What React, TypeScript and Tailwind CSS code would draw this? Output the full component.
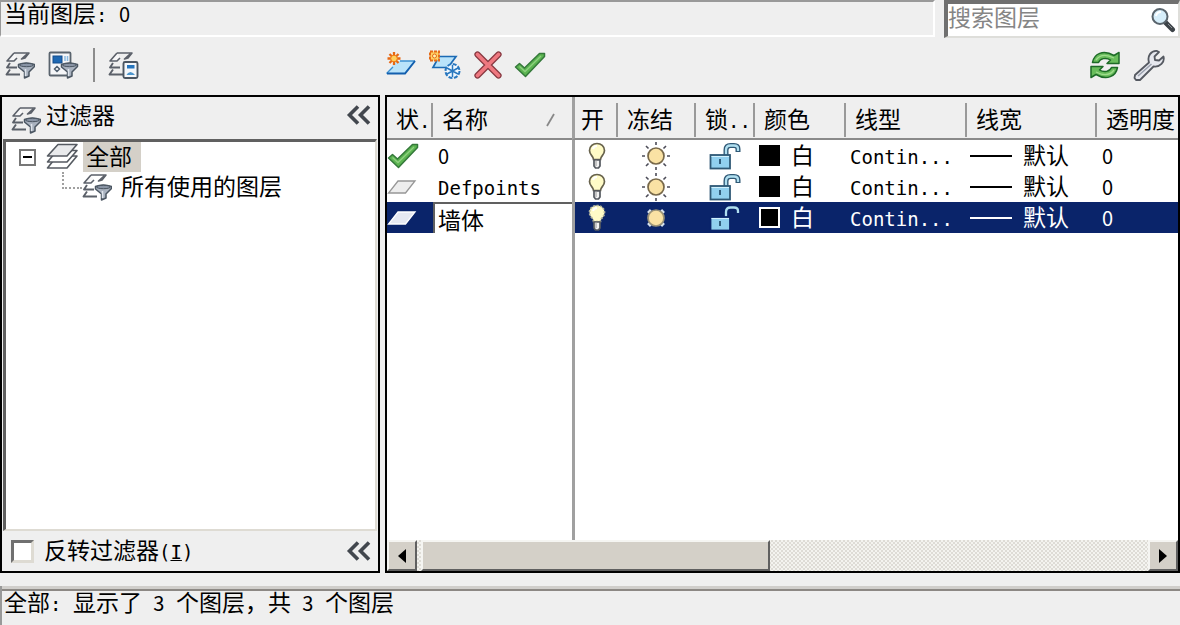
import React from "react";

const CJK = "font-['Liberation_Sans','Noto_Sans_CJK_SC',sans-serif] text-[23px] leading-[28px]";
const MONO = "font-['DejaVu_Sans_Mono',monospace] text-[19px] leading-none";
const NUM = "font-['Noto_Sans_CJK_SC',sans-serif] text-[20px] leading-none";

function Mono({ children }: { children: React.ReactNode }) {
  return <span className={`${MONO} whitespace-pre`}>{children}</span>;
}

function Num({ children }: { children: React.ReactNode }) {
  return <span className={NUM}>{children}</span>;
}

function Svg({ w = 30, h = 30, children }: { w?: number; h?: number; children: React.ReactNode }) {
  return (
    <svg width={w} height={h} viewBox={`0 0 ${w} ${h}`} fill="none" aria-hidden="true" className="block shrink-0">
      {children}
    </svg>
  );
}

function Stack() {
  return (
    <g stroke="#5b6069" strokeWidth="1.6" strokeLinejoin="round">
      <path d="M9 3H24L20 8L16.500 9L22 4M9 3L2 11H9L12 8" fill="#f7f7f8" />
      <path d="M5 13L2 17.500H12M5 19.500L1.500 24.500H15" strokeWidth="1.9" />
    </g>
  );
}

function Funnel() {
  return (
    <g stroke="#4a5561" strokeWidth="1.500" strokeLinejoin="round">
      <path d="M13.500 14.500Q21 11.500 29.500 14.500V16.500L24 22V26L19.500 28V22L13.500 17Z" fill="#a9b2bf" />
      <ellipse cx="21.500" cy="15" rx="7" ry="1.700" fill="#8994a5" strokeWidth="1" />
      <path d="M20.500 19V26" stroke="#dfe4ec" strokeWidth="1.500" />
    </g>
  );
}

function FilterIcon() {
  return (
    <Svg>
      <Stack />
      <Funnel />
    </Svg>
  );
}

function StateFilterIcon() {
  return (
    <Svg w={32}>
      <rect x="1.500" y="2.500" width="21" height="23" rx="1" fill="#f5f6f8" stroke="#59636d" strokeWidth="1.800" />
      <rect x="5" y="6" width="9" height="7" fill="#1e68b3" stroke="#144d8c" />
      <path d="M17 6V11M19.500 6V11" stroke="#8bbbe2" strokeWidth="1.500" />
      <path d="M9 16.500L11.500 19L9 21.500L6.500 19Z" stroke="#51606f" strokeWidth="1.500" />
      <Funnel />
    </Svg>
  );
}

function StatesManagerIcon() {
  return (
    <Svg w={32}>
      <Stack />
      <rect x="15.500" y="12" width="14" height="16" rx="1.500" fill="#f4f7fa" stroke="#4b5662" strokeWidth="1.900" />
      <rect x="19" y="15" width="7.500" height="3.500" fill="#2675bd" />
      <path d="M18.500 25L20 23L22.500 22L25 23L27 25Z" fill="#4d96cd" />
    </Svg>
  );
}

function NewLayerIcon() {
  return (
    <Svg w={32}>
      <path d="M11 11H30L20 23.500H1.500Z" fill="#b9e3fa" />
      <path d="M15 11H30M8 17L1.500 23.500" stroke="#3c91d2" strokeWidth="1.300" />
      <path d="M30 11L20 23.500H2" stroke="#125fae" strokeWidth="2" />
      <path d="M9 2V15M2.500 8.500H15.500M4.500 4L13.500 13M13.500 4L4.500 13" stroke="#e76813" strokeWidth="2.300" />
      <circle cx="9" cy="8.500" r="3.300" fill="#ffd05d" stroke="#ed7b17" />
    </Svg>
  );
}

function NewFrozenIcon() {
  return (
    <Svg w={34}>
      <path d="M11 6.500H28L20 17.500H5Z" fill="#b9e3fa" stroke="#1b6ab4" strokeWidth="1.700" />
      <rect x="2" y="1.500" width="9" height="9" fill="#ffd365" stroke="#e56b17" strokeWidth="2" strokeDasharray="3 1" />
      <circle cx="6.500" cy="6" r="2" fill="#fff0b0" stroke="#e56b17" />
      <circle cx="24.500" cy="21" r="7" fill="#eff8ff" stroke="#2877bf" strokeWidth="2" strokeDasharray="4 1.500" />
      <path d="M24.500 15V27M19 18L30 24M30 18L19 24" stroke="#2877bf" strokeWidth="1.500" />
    </Svg>
  );
}

function DeleteIcon() {
  return (
    <Svg>
      <path d="M4.500 4.500L25.500 25.500M25.500 4.500L4.500 25.500" stroke="#873840" strokeWidth="6.200" strokeLinecap="round" />
      <path d="M4.500 4.500L25.500 25.500M25.500 4.500L4.500 25.500" stroke="#ef7880" strokeWidth="3.800" strokeLinecap="round" />
    </Svg>
  );
}

function CheckIcon() {
  return (
    <Svg w={32} h={28}>
      <path d="M1.500 16L5.500 12.500L10.500 17L25.500 2.500H30.500V5.500L11.500 25.500Z" fill="#5bb450" stroke="#34783a" strokeWidth="1.500" strokeLinejoin="round" />
      <path d="M5.500 15.500L11 20.500L27 5" stroke="#8fd080" strokeWidth="1.300" />
    </Svg>
  );
}

function RefreshIcon() {
  return (
    <Svg w={32}>
      <g fill="#68bd5b" stroke="#1d6b27" strokeWidth="1.500" strokeLinejoin="round">
        <path d="M3.500 12.500C5 4 14 -1 25 5.500L30 2.500V13.500H18L21.500 10C17 7 11 8.500 9.500 12.500Z" />
        <path d="M28.500 17.500C27 26 18 31 7 24.500L2 27.500V16.500H14L10.500 20C15 23 21 21.500 22.500 17.500Z" />
      </g>
      <path d="M7 10C11 4.500 18 4.500 25 8M25 20C21 25.500 14 25.500 7 22" stroke="#a0dc8e" strokeWidth="1.300" />
    </Svg>
  );
}

function WrenchIcon() {
  return (
    <Svg w={32} h={32}>
      <path d="M2 26L16 13.500C14 7 18 1.500 24 2L26 3L21.500 7.500L22 11L26 11.500L30.500 7.500C32 13 27 18.500 20.500 17.500L7 31H3L1.500 29Z" fill="#e6e8ee" stroke="#555961" strokeWidth="1.800" strokeLinejoin="round" />
      <path d="M5 27L18.500 15" stroke="#9aa0ad" strokeWidth="1.500" />
    </Svg>
  );
}

function SearchIcon() {
  return (
    <Svg w={26} h={26}>
      <path d="M15 15L22.500 22.500" stroke="#3d4348" strokeWidth="5" strokeLinecap="round" />
      <path d="M18 17L22 21" stroke="#8d9297" strokeWidth="1" />
      <circle cx="10" cy="9.500" r="7.500" fill="#d6eefa" stroke="#59646c" strokeWidth="2" />
      <path d="M6 9A5 5 0 0 1 11 5" stroke="#fff" strokeWidth="2" />
    </Svg>
  );
}

function LayersIcon() {
  return (
    <Svg w={32}>
      <g stroke="#555a61" strokeWidth="1.600" strokeLinejoin="round">
        <path d="M11 14H31L21 26H1.500Z" fill="#fff" />
        <path d="M11 8.500H31L21 20H1.500Z" fill="#fff" />
        <path d="M12 2.500H31L21 14H1.500Z" fill="#e9eaec" />
      </g>
    </Svg>
  );
}

function SheetIcon({ selected }: { selected?: boolean }) {
  return (
    <Svg w={30} h={16}>
      <path d="M11 2H28L18.500 14H1.500Z" fill={selected ? "#e6e9f2" : "#ededed"} stroke={selected ? "#fff" : "#969696"} strokeWidth="1.300" />
    </Svg>
  );
}

function BulbIcon({ selected }: { selected?: boolean }) {
  const line = selected ? "#b2b39b" : "#67624c";
  return (
    <Svg w={20} h={28}>
      <path d="M6.500 17.500C6.500 14 2.500 13 2.500 8.500C2.500 4 6 1.500 10 1.500S17.500 4 17.500 8.500C17.500 13 13.500 14 13.500 17.500Z" fill="#fffbc7" stroke={line} strokeWidth="1.700" strokeDasharray={selected ? "2 1.500" : undefined} />
      <path d="M7 18H13V24L11.500 26H8.500L7 24Z" fill="#f3f3f3" stroke="#555a60" strokeWidth="1.700" />
      <path d="M9 18V24" stroke="#999" />
      <path d="M6 7C6.500 5 8 4 10 4" stroke="#fff" strokeWidth="2" />
    </Svg>
  );
}

function SunIcon({ selected }: { selected?: boolean }) {
  return (
    <Svg>
      {!selected && (
        <path d="M15 1V4M15 26V29M1 15H4M26 15H29M5 5L7.500 7.500M22.500 22.500L25 25M5 25L7.500 22.500M22.500 7.500L25 5" stroke="#4c4c58" strokeWidth="1.600" />
      )}
      {selected && <path d="M7.500 7.500L10 10M20 20L22.500 22.500M7.500 22.500L10 20M20 10L22.500 7.500" stroke="#d7e3ef" strokeWidth="4" />}
      <circle cx="15" cy="15" r="8" fill="#fae2a4" stroke={selected ? "#9b9378" : "#77684a"} strokeWidth="1.700" />
    </Svg>
  );
}

function LockIcon({ selected }: { selected?: boolean }) {
  const line = selected ? "#0a246a" : "#2f5875";
  return (
    <Svg w={32} h={28}>
      <path d="M17 13V8Q17 3.500 21.500 3.500H25Q29 3.500 29 7V10" stroke={line} strokeWidth="5" />
      <path d="M17 13V8Q17 3.500 21.500 3.500H25Q29 3.500 29 7V9" stroke="#b0dff0" strokeWidth="2.300" />
      <rect x="1.500" y="13" width="19.500" height="13.500" fill="#91d0ef" stroke={line} strokeWidth="1.800" />
      <path d="M2.500 14.500H20" stroke="#d0f0fd" />
      <path d="M11 17V22" stroke="#315d7c" strokeWidth="2" />
    </Svg>
  );
}

function CollapseIcon() {
  return (
    <Svg w={26} h={20}>
      <path d="M12 1.500L3.500 10L12 18.500M23 1.500L14.500 10L23 18.500" stroke="#42474e" strokeWidth="3.600" />
    </Svg>
  );
}

type HeadProps = { label: React.ReactNode; pad: string; last?: boolean; sort?: boolean; split?: boolean };

function Head({ label, pad, last, sort, split }: HeadProps) {
  return (
    <th scope="col" className={`h-[43px] border-b-2 border-b-[#8a8a8a] bg-[#efefef] p-0 pt-1 text-left font-normal ${split ? "border-l-[3px] border-l-[#a0a0a0]" : ""}`}>
      <div className={`flex h-[34px] items-center whitespace-nowrap ${pad} ${last ? "" : "border-r-2 border-[#999]"}`}>
        <span className={CJK}>{label}</span>
        {sort && (
          <svg width="10" height="14" viewBox="0 0 10 14" className="mr-4 ml-auto" aria-hidden="true">
            <path d="M1 13L8 1" stroke="#888" strokeWidth="1.800" />
          </svg>
        )}
      </div>
    </th>
  );
}

const layers = [
  { name: "0", current: true },
  { name: "Defpoints" },
  { name: "墙体", selected: true },
];

const CELL = "flex h-[31px] items-center";

function LayerRow({ name, current, selected }: { name: string; current?: boolean; selected?: boolean }) {
  const [value, setValue] = React.useState(name);
  return (
    <tr className={`h-[31px] ${selected ? "bg-[#0a246a] text-white" : ""}`}>
      <td className="p-0">
        <div className={CELL}>{current ? <CheckIcon /> : <SheetIcon selected={selected} />}</div>
      </td>
      <td className="p-0">
        {selected ? (
          <input
            aria-label="名称"
            value={value}
            onChange={(e) => setValue(e.target.value)}
            className={`${CJK} block h-[31px] w-full border-t-2 border-l-2 border-[#606060] bg-white pl-[3px] text-black outline-none`}
          />
        ) : (
          <div className={`${CELL} pl-[5px]`}>
            <span>{current ? <Num>{name}</Num> : <Mono>{name}</Mono>}</span>
          </div>
        )}
      </td>
      <td className="border-l-[3px] border-[#a0a0a0] p-0">
        <div className={`${CELL} pl-3`}><BulbIcon selected={selected} /></div>
      </td>
      <td className="p-0">
        <div className={`${CELL} pl-[23px]`}><SunIcon selected={selected} /></div>
      </td>
      <td className="p-0">
        <div className={`${CELL} pl-[13px]`}><LockIcon selected={selected} /></div>
      </td>
      <td className="p-0">
        <div className={`${CELL} gap-[11px] pl-1`}>
          <span className={`size-[21px] border-2 bg-black ${selected ? "border-white" : "border-black"}`} />
          <span>白</span>
        </div>
      </td>
      <td className="p-0">
        <div className={`${CELL} pl-1`}><span><Mono>Contin...</Mono></span></div>
      </td>
      <td className="p-0">
        <div className={`${CELL} gap-[11px] pl-[3px]`}>
          <span className="w-[42px] border-t-2 border-current" />
          <span>默认</span>
        </div>
      </td>
      <td className="p-0">
        <div className={`${CELL} pl-[5px]`}><span><Num>0</Num></span></div>
      </td>
    </tr>
  );
}

function ScrollButton({ right }: { right?: boolean }) {
  return (
    <button aria-label={right ? "向右滚动" : "向左滚动"} className="flex w-[30px] items-center justify-center border-2 border-t-[#f5f5f2] border-r-[#606060] border-b-[#606060] border-l-[#f5f5f2] bg-[#d4d0c8]">
      <svg width="10" height="14" viewBox="0 0 10 14" aria-hidden="true">
        <path d={right ? "M1 0L9 7L1 14Z" : "M9 0L1 7L9 14Z"} fill="#000" />
      </svg>
    </button>
  );
}

export default function App() {
  return (
    <div className={`flex min-h-screen flex-col bg-[#efefef] text-black ${CJK}`}>
      <header className="flex h-[38px] gap-[9px]">
        <div className="mb-px flex-1 border-t-2 border-r-2 border-b-2 border-l border-t-[#999] border-r-white border-b-white border-l-[#999] pl-[3px]">
          <div className="leading-[24px] whitespace-nowrap">当前图层<Mono>: </Mono><Num>0</Num></div>
        </div>
        <label className="flex w-[236px] items-start justify-between border-t-4 border-r-2 border-b-2 border-l-4 border-t-[#707070] border-r-[#dededa] border-b-[#dededa] border-l-[#707070] bg-white pr-[2px]">
          <input aria-label="搜索图层" placeholder="搜索图层" className={`${CJK} h-[28px] w-[180px] bg-transparent outline-none placeholder:text-[#858585]`} />
          <span className="pt-[3px]"><SearchIcon /></span>
        </label>
      </header>

      <div className="flex h-[57px] items-center justify-between pr-[15px] pb-1 pl-[5px]">
        <div className="flex items-center">
          <div className="flex w-[380px] items-center">
            <button aria-label="新建特性过滤器"><FilterIcon /></button>
            <button aria-label="新建组过滤器" className="ml-[13px]"><StateFilterIcon /></button>
            <span className="ml-[13px] h-[34px] border-l-2 border-[#8c8c8c]" />
            <button aria-label="图层状态管理器" className="ml-[13px]"><StatesManagerIcon /></button>
          </div>
          <div className="flex items-center gap-[11px]">
            <button aria-label="新建图层"><NewLayerIcon /></button>
            <button aria-label="新建冻结图层"><NewFrozenIcon /></button>
            <button aria-label="删除图层"><DeleteIcon /></button>
            <button aria-label="置为当前"><CheckIcon /></button>
          </div>
        </div>
        <div className="flex items-center gap-3">
          <button aria-label="刷新"><RefreshIcon /></button>
          <button aria-label="设置"><WrenchIcon /></button>
        </div>
      </div>

      <main className="flex flex-1 gap-[5px]">
        <section className="flex w-[380px] shrink-0 flex-col border-2 border-black">
          <div className="flex h-[42px] items-start justify-between pr-[6px] pl-[9px]">
            <div className="flex items-start gap-[5px]">
              <div className="pt-2"><FilterIcon /></div>
              <h2 className="pt-[5px]">过滤器</h2>
            </div>
            <button aria-label="折叠过滤器" className="pt-2"><CollapseIcon /></button>
          </div>
          <ul className="mr-px ml-px flex-1 border-t-[3px] border-r-2 border-b-2 border-l-[3px] border-t-[#606060] border-r-[#dedbd3] border-b-[#dedbd3] border-l-[#606060] bg-white">
            <li>
              <div className="flex h-[30px] items-center">
                <button aria-label="折叠" className="ml-[13px] flex size-[17px] items-center justify-center border-2 border-[#777]">
                  <span className="w-[9px] border-t-2 border-black" />
                </button>
                <span className="ml-[10px]"><LayersIcon /></span>
                <span className="ml-[5px] h-[30px] bg-[#d4d0c8] pt-px pr-[9px] pl-[3px]">全部</span>
              </div>
              <ul>
                <li className="flex h-[31px] items-start">
                  <span className="ml-[56px] h-[17px] w-[20px] border-b-2 border-l-2 border-dotted border-[#a0a0a0]" />
                  <FilterIcon />
                  <span className="ml-[9px] pt-px">所有使用的图层</span>
                </li>
              </ul>
            </li>
          </ul>
          <div className="flex h-[40px] items-center justify-between pr-[6px] pl-[9px]">
            <label className="flex items-center gap-[10px]">
              <input type="checkbox" className="size-[23px] appearance-none border-[3px] border-t-[#707070] border-r-[#dedbd3] border-b-[#dedbd3] border-l-[#707070] bg-white" />
              <span className="whitespace-nowrap">反转过滤器<Mono>(<u>I</u>)</Mono></span>
            </label>
            <button aria-label="折叠面板"><CollapseIcon /></button>
          </div>
        </section>

        <section className="flex min-w-0 flex-1 flex-col border-2 border-black bg-white">
          <div className="flex min-w-0 flex-1 overflow-hidden">
            <table className="w-full table-fixed border-separate border-spacing-0">
              <colgroup>
                <col className="w-[46px]" />
                <col className="w-[139px]" />
                <col className="w-[46px]" />
                <col className="w-[78px]" />
                <col className="w-[59px]" />
                <col className="w-[91px]" />
                <col className="w-[121px]" />
                <col className="w-[130px]" />
                <col />
              </colgroup>
              <thead>
                <tr>
                  <Head label={<>状<Mono>.</Mono></>} pad="pl-[9px]" />
                  <Head label="名称" pad="pl-[9px]" sort last />
                  <Head label="开" pad="pl-[6px]" split />
                  <Head label="冻结" pad="pl-[9px]" />
                  <Head label={<>锁<Mono>..</Mono></>} pad="pl-[9px]" />
                  <Head label="颜色" pad="pl-[9px]" />
                  <Head label="线型" pad="pl-[9px]" />
                  <Head label="线宽" pad="pl-[9px]" />
                  <Head label="透明度" pad="pl-[9px]" last />
                </tr>
              </thead>
              <tbody>
                {layers.map((layer) => (
                  <LayerRow key={layer.name} {...layer} />
                ))}
                <tr aria-hidden="true">
                  <td colSpan={2} className="p-0" />
                  <td colSpan={7} className="border-l-[3px] border-[#a0a0a0] p-0" />
                </tr>
              </tbody>
            </table>
          </div>
          <div className="flex h-[31px] bg-[repeating-conic-gradient(#f4f4f0_0_25%,#dedcd6_0_50%)] bg-size-[4px_4px]">
            <ScrollButton />
            <div className="flex flex-1 pl-1">
              <div className="w-[48%] border-2 border-t-[#f5f5f2] border-r-[#606060] border-b-[#606060] border-l-[#f5f5f2] bg-[#d4d0c8]" />
            </div>
            <ScrollButton right />
          </div>
        </section>
      </main>

      <footer className="mt-[13px] h-[39px] border-l-2 border-[#999]">
        <div className="h-[3px] bg-[#d0cecb]" />
        <div className="border-t-2 border-[#8c8884] pl-[2px] leading-[24px] whitespace-nowrap">
          全部<Mono>: </Mono>显示了<Mono> </Mono><Num>3</Num><Mono> </Mono>个图层{"\uff0c"}共<Mono> </Mono><Num>3</Num><Mono> </Mono>个图层
        </div>
      </footer>
    </div>
  );
}
